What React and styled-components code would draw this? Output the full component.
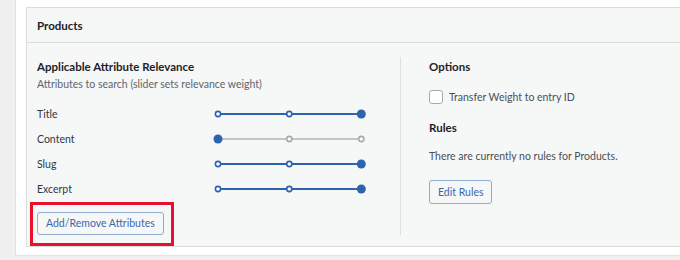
import React from "react";
import styled, { createGlobalStyle } from "styled-components";

const FS = 10.5;
const HS = 11.5;

const Global = createGlobalStyle`
  html, body { margin: 0; padding: 0; background: #f0f0f1; }
  body { font-family: Lato, "Noto Sans", sans-serif; color: #1d2327; }
  * { box-sizing: border-box; }
`;

const Card = styled.div`
  margin-left: 15px;
  background: #ffffff;
  border-left: 1px solid #e2e2e4;
  border-bottom: 1px solid #e2e2e4;
  padding: 7px 0 8px 10px;
`;

const Panel = styled.section`
  background: #f6f7f7;
  border: 1px solid #dcdcde;
  border-right: none;
`;

const PanelHeader = styled.header`
  height: 35px;
  border-bottom: 1px solid #dcdcde;
  display: flex;
  align-items: center;
  padding-left: 10px;
  font-size: ${HS}px;
  font-weight: 700;
  color: #1d2327;
`;

const PanelBody = styled.div`
  display: grid;
  grid-template-columns: 364px 1fr;
  padding: 15px 0 11px 10px;
`;

const Column = styled.div`
  display: flex;
  flex-direction: column;
  align-items: flex-start;
  ${(p) => p.$divider && `border-right: 1px solid #e0e0e2; margin-top: -1px; padding-top: 1px;`}
  ${(p) => p.$right && `padding-left: 28px;`}
`;

const Heading = styled.h3`
  margin: ${(p) => p.$mt || 0}px 0 0;
  font-size: ${HS}px;
  font-weight: 700;
  line-height: 18px;
  color: #1d2327;
`;

const Hint = styled.p`
  margin: 0;
  font-size: ${FS}px;
  line-height: 16px;
  color: #5f646a;
`;

const Text = styled.p`
  margin: 10px 0 0;
  font-size: ${FS}px;
  line-height: 18px;
  color: #4a5056;
`;

const Rows = styled.div`
  margin-top: 9px;
  display: flex;
  flex-direction: column;
  width: 100%;
`;

const Row = styled.div`
  height: 25px;
  display: flex;
  align-items: center;
`;

const Label = styled.span`
  width: 176px;
  font-size: ${FS}px;
  color: #32383e;
`;

const Button = styled.button`
  height: ${(p) => p.$h || 24}px;
  padding: 0 8px;
  border: 1px solid #92acd3;
  border-radius: 3px;
  background: #f6f7f7;
  color: #3a68ab;
  font-family: inherit;
  font-size: ${FS}px;
  cursor: pointer;
`;

const Highlight = styled.div`
  position: relative;
  margin-top: ${(p) => p.$mt || 10}px;
`;

const RedBox = styled.span`
  position: absolute;
  left: -7px;
  top: -9px;
  right: -10px;
  bottom: -11px;
  border: 3px solid #e8112d;
  pointer-events: none;
`;

const CheckRow = styled.label`
  margin-top: 12px;
  display: flex;
  align-items: center;
  gap: 6px;
  font-size: ${FS}px;
  line-height: 18px;
  color: #4a5056;
`;

const Box = styled.span`
  width: 14px;
  height: 14px;
  border: 1px solid #a7aaad;
  border-radius: 3px;
  background: #ffffff;
`;

const BLUE = "#2c64ad";
const GRAY_LINE = "#c3c4c7";
const GRAY_DOT = "#a7aaad";

function Slider({ value }) {
  const xs = [5, 76.3, 148.3];
  const hx = xs[value];
  return (
    <svg width="154" height="12" viewBox="0 0 154 12">
      {hx > xs[0] && <line x1={xs[0]} y1="6" x2={hx} y2="6" stroke={BLUE} strokeWidth="2" />}
      {hx < xs[2] && <line x1={hx} y1="6" x2={xs[2]} y2="6" stroke={GRAY_LINE} strokeWidth="2" />}
      {xs.map((x, i) =>
        i === value ? (
          <circle key={i} cx={x} cy="6" r="4.5" fill={BLUE} />
        ) : (
          <circle
            key={i}
            cx={x}
            cy="6"
            r="2.6"
            fill="#ffffff"
            stroke={i < value ? BLUE : GRAY_DOT}
            strokeWidth="1.6"
          />
        )
      )}
    </svg>
  );
}

const attrs = [
  { name: "Title", value: 2 },
  { name: "Content", value: 0 },
  { name: "Slug", value: 2 },
  { name: "Excerpt", value: 2 },
];

export default function App() {
  return (
    <>
      <Global />
      <Card>
        <Panel>
          <PanelHeader>Products</PanelHeader>
          <PanelBody>
            <Column $divider>
              <Heading>Applicable Attribute Relevance</Heading>
              <Hint>Attributes to search (slider sets relevance weight)</Hint>
              <Rows>
                {attrs.map((a) => (
                  <Row key={a.name}>
                    <Label>{a.name}</Label>
                    <Slider value={a.value} />
                  </Row>
                ))}
              </Rows>
              <Highlight>
                <Button $h={23}>Add/Remove Attributes</Button>
                <RedBox />
              </Highlight>
            </Column>
            <Column $right>
              <Heading>Options</Heading>
              <CheckRow>
                <Box />
                Transfer Weight to entry ID
              </CheckRow>
              <Heading $mt={13}>Rules</Heading>
              <Text>There are currently no rules for Products.</Text>
              <Highlight $mt={15}>
                <Button>Edit Rules</Button>
              </Highlight>
            </Column>
          </PanelBody>
        </Panel>
      </Card>
    </>
  );
}
